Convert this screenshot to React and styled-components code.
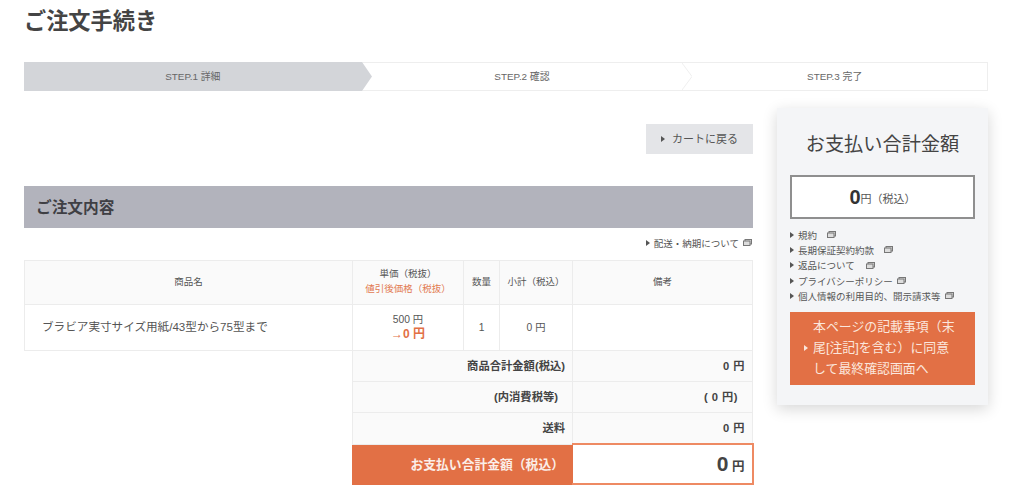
import styled, {createGlobalStyle} from 'styled-components';

const GlobalStyle = createGlobalStyle`
  html, body {
    margin: 0;
    padding: 0;
    background: #fff;
  }
  body {
    font-family: 'Liberation Sans', 'Noto Sans CJK JP', sans-serif;
    color: #444;
  }
  * {
    box-sizing: border-box;
  }
`;

const links = [
  {label: '規約', gap: 10},
  {label: '長期保証契約約款', gap: 10},
  {label: '返品について', gap: 11},
  {label: 'プライバシーポリシー', gap: 4},
  {label: '個人情報の利用目的、開示請求等', gap: 4},
];

const totals = [
  {label: '商品合計金額(税込)', value: '0 円'},
  {label: '(内消費税等)', value: '( 0 円)', inset: true},
  {label: '送料', value: '0 円'},
];

const Triangle = ({color = '#555'}) => (
  <Tri width='4' height='6' viewBox='0 0 4 6'>
    <path d='M0 0 L4 3 L0 6 Z' fill={color} />
  </Tri>
);

const WindowIcon = () => (
  <svg width='9' height='7' viewBox='0 0 9 7'>
    <rect x='2' y='0.5' width='6.5' height='4.5' fill='#ddd' stroke='#777' />
    <rect x='0.5' y='2' width='6.5' height='4.5' fill='#ddd' stroke='#777' />
  </svg>
);

const StepArrow = ({filled}) => (
  <ArrowSvg viewBox='0 0 10 29' preserveAspectRatio='none'>
    <path
      d='M0 0 L10 14.5 L0 29 Z'
      fill={filled ? '#d3d5d9' : '#fff'}
    />
    {!filled && (
      <path d='M0 0 L10 14.5 L0 29' fill='none' stroke='#eee' strokeWidth='1' />
    )}
  </ArrowSvg>
);

const App = () => {
  return (
    <Page>
      <GlobalStyle />
      <Title>ご注文手続き</Title>
      <Stepper>
        <Step $width={338} $active>
          STEP.1 詳細
          <StepArrow filled />
        </Step>
        <Step $width={321}>
          STEP.2 確認
          <StepArrow />
        </Step>
        <Step $width={305}>STEP.3 完了</Step>
      </Stepper>
      <Columns>
        <Main>
          <BackRow>
            <BackButton>
              <Triangle />
              <span>カートに戻る</span>
            </BackButton>
          </BackRow>
          <SectionHeading>ご注文内容</SectionHeading>
          <DeliveryLink>
            <Triangle />
            配送・納期について
            <WindowIcon />
          </DeliveryLink>
          <OrderTable>
            <colgroup>
              <col style={{width: 328}} />
              <col style={{width: 111}} />
              <col style={{width: 36}} />
              <col style={{width: 73}} />
              <col style={{width: 180}} />
            </colgroup>
            <thead>
              <tr>
                <HeadCell>商品名</HeadCell>
                <HeadCell>
                  単価（税抜）
                  <DiscountLabel>値引後価格（税抜）</DiscountLabel>
                </HeadCell>
                <HeadCell>数量</HeadCell>
                <HeadCell>小計（税込）</HeadCell>
                <HeadCell>備考</HeadCell>
              </tr>
            </thead>
            <tbody>
              <BodyRow>
                <NameCell>ブラビア実寸サイズ用紙/43型から75型まで</NameCell>
                <BodyCell>
                  500 円<DiscountPrice>→0 円</DiscountPrice>
                </BodyCell>
                <BodyCell>1</BodyCell>
                <BodyCell>0 円</BodyCell>
                <BodyCell />
              </BodyRow>
              {totals.map((item) => (
                <TotalRow key={item.label}>
                  <EmptyCell />
                  <TotalLabel colSpan={3} $inset={item.inset}>
                    {item.label}
                  </TotalLabel>
                  <TotalValue $inset={item.inset}>{item.value}</TotalValue>
                </TotalRow>
              ))}
              <GrandRow>
                <EmptyCell />
                <GrandLabel colSpan={3}>お支払い合計金額（税込）</GrandLabel>
                <GrandValue>
                  <strong>0</strong> 円
                </GrandValue>
              </GrandRow>
            </tbody>
          </OrderTable>
        </Main>
        <Side>
          <SideTitle>お支払い合計金額</SideTitle>
          <AmountBox>
            <b>0</b>
            <small>円</small>
            <Tax>（税込）</Tax>
          </AmountBox>
          <LinkList>
            {links.map((item) => (
              <LinkItem key={item.label}>
                <Triangle />
                <span>{item.label}</span>
                <IconGap $gap={item.gap}>
                  <WindowIcon />
                </IconGap>
              </LinkItem>
            ))}
          </LinkList>
          <ConfirmButton>
            <Triangle color='#fbe6dc' />
            <span>本ページの記載事項（末尾[注記]を含む）に同意して最終確認画面へ</span>
          </ConfirmButton>
        </Side>
      </Columns>
    </Page>
  );
};

const Page = styled.div`
  width: 1024px;
  height: 503px;
  padding: 0 36px 0 24px;
  overflow: hidden;
`;

const Title = styled.h1`
  margin: 0;
  height: 62px;
  padding-top: 7px;
  font-size: 22.2px;
  line-height: 30px;
  font-weight: 700;
  color: #444;
`;

const Stepper = styled.div`
  display: flex;
  height: 29px;
  border: 1px solid #eeeeee;
  border-left: 0;
`;

const Step = styled.div`
  position: relative;
  width: ${(props) => props.$width}px;
  margin: ${(props) => (props.$active ? '-1px 0' : '0')};
  padding-bottom: 2px;
  display: flex;
  align-items: center;
  justify-content: center;
  font-size: 9.9px;
  color: #666;
  background: ${(props) => (props.$active ? '#d3d5d9' : '#fff')};
`;

const ArrowSvg = styled.svg`
  position: absolute;
  z-index: 1;
  top: 0;
  left: 100%;
  width: 10px;
  height: 100%;
`;

const Columns = styled.div`
  display: flex;
  gap: 24px;
`;

const Main = styled.div`
  width: 729px;
`;

const BackRow = styled.div`
  display: flex;
  justify-content: flex-end;
  padding-top: 33px;
`;

const BackButton = styled.div`
  width: 107px;
  height: 30px;
  display: flex;
  align-items: center;
  justify-content: center;
  gap: 7px;
  background: #e4e5e8;
  font-size: 11px;
  color: #555;
  span {
    margin-bottom: 3px;
  }
`;

const Tri = styled.svg`
  flex: none;
`;

const SectionHeading = styled.h2`
  margin: 32px 0 0;
  height: 42px;
  padding: 0 0 2px 12px;
  display: flex;
  align-items: center;
  background: #b2b3bc;
  font-size: 15.7px;
  font-weight: 700;
  color: #3f3f44;
`;

const DeliveryLink = styled.div`
  height: 31.5px;
  padding: 0 1px 2px 0;
  display: flex;
  align-items: center;
  justify-content: flex-end;
  gap: 4px;
  font-size: 9.5px;
  color: #555;
`;

const OrderTable = styled.table`
  width: 728px;
  table-layout: fixed;
  border-collapse: collapse;
  font-size: 9.5px;
  color: #555;
  td,
  th {
    padding: 0;
  }
`;

const HeadCell = styled.th`
  height: 44px;
  padding-bottom: 2px !important;
  font-weight: 400;
  line-height: 15px;
  text-align: center;
  background: #fafafa;
  border: 1px solid #ececec;
`;

const DiscountLabel = styled.div`
  color: #e27a52;
`;

const BodyRow = styled.tr`
  height: 46px;
`;

const BodyCell = styled.td`
  text-align: center;
  font-size: 10.3px;
  line-height: 15px;
  border: 1px solid #ececec;
`;

const NameCell = styled(BodyCell)`
  padding: 0 0 1px 17px !important;
  text-align: left;
  font-size: 11.6px;
`;

const DiscountPrice = styled.div`
  font-size: 12px;
  font-weight: 700;
  color: #e27045;
`;

const TotalRow = styled.tr`
  height: 31.4px;
`;

const EmptyCell = styled.td`
  border: 0;
`;

const TotalLabel = styled.td`
  text-align: right;
  padding: 0 ${(props) => (props.$inset ? '14px' : '7px')} 2px 0 !important;
  font-size: 11.3px;
  font-weight: 700;
  color: #444;
  background: #fafafa;
  border: 1px solid #ececec;
`;

const TotalValue = styled(TotalLabel)`
  font-size: 11.2px;
  letter-spacing: 0.5px;
`;

const GrandRow = styled.tr`
  height: 40px;
`;

const GrandLabel = styled.td`
  text-align: right;
  padding: 0 8px 2px 0 !important;
  background: #e27045;
  border: 1px solid #e27045;
  font-size: 12.8px;
  font-weight: 700;
  color: #fbeee8;
`;

const GrandValue = styled.td`
  text-align: right;
  padding-right: 7px !important;
  background: #fff;
  border: 2px solid #ee8a63;
  border-left-width: 1px;
  font-size: 12.5px;
  font-weight: 700;
  color: #444;
  strong {
    font-size: 21px;
    font-weight: 700;
  }
`;

const Side = styled.aside`
  width: 211px;
  height: 297px;
  margin-top: 17px;
  padding: 0 13px;
  background: #f4f5f7;
  box-shadow: 0 4px 14px rgba(0, 0, 0, 0.16);
`;

const SideTitle = styled.div`
  height: 67px;
  padding-top: 2px;
  display: flex;
  align-items: center;
  justify-content: center;
  font-size: 19.2px;
  color: #444;
`;

const AmountBox = styled.div`
  height: 44px;
  padding-top: 1px;
  display: flex;
  align-items: center;
  justify-content: center;
  background: #fff;
  border: 2px solid #8f8f8f;
  font-size: 11px;
  color: #555;
  b {
    font-size: 20px;
    color: #333;
  }
  small {
    font-size: 11px;
  }
`;

const Tax = styled.span`
  font-size: 11px;
`;

const LinkList = styled.ul`
  margin: 8px 0 0;
  padding: 0;
  list-style: none;
`;

const LinkItem = styled.li`
  height: 15.3px;
  display: flex;
  align-items: center;
  gap: 4px;
  font-size: 9.5px;
  color: #555;
`;

const IconGap = styled.span`
  display: inline-flex;
  margin-left: ${(props) => props.$gap - 4}px;
`;

const ConfirmButton = styled.div`
  height: 73px;
  margin-top: 8.5px;
  display: flex;
  align-items: center;
  gap: 5px;
  padding: 0 16px 0 14px;
  background: #e27045;
  font-size: 12.9px;
  line-height: 20.7px;
  color: #fbe6dc;
`;

export default App;
